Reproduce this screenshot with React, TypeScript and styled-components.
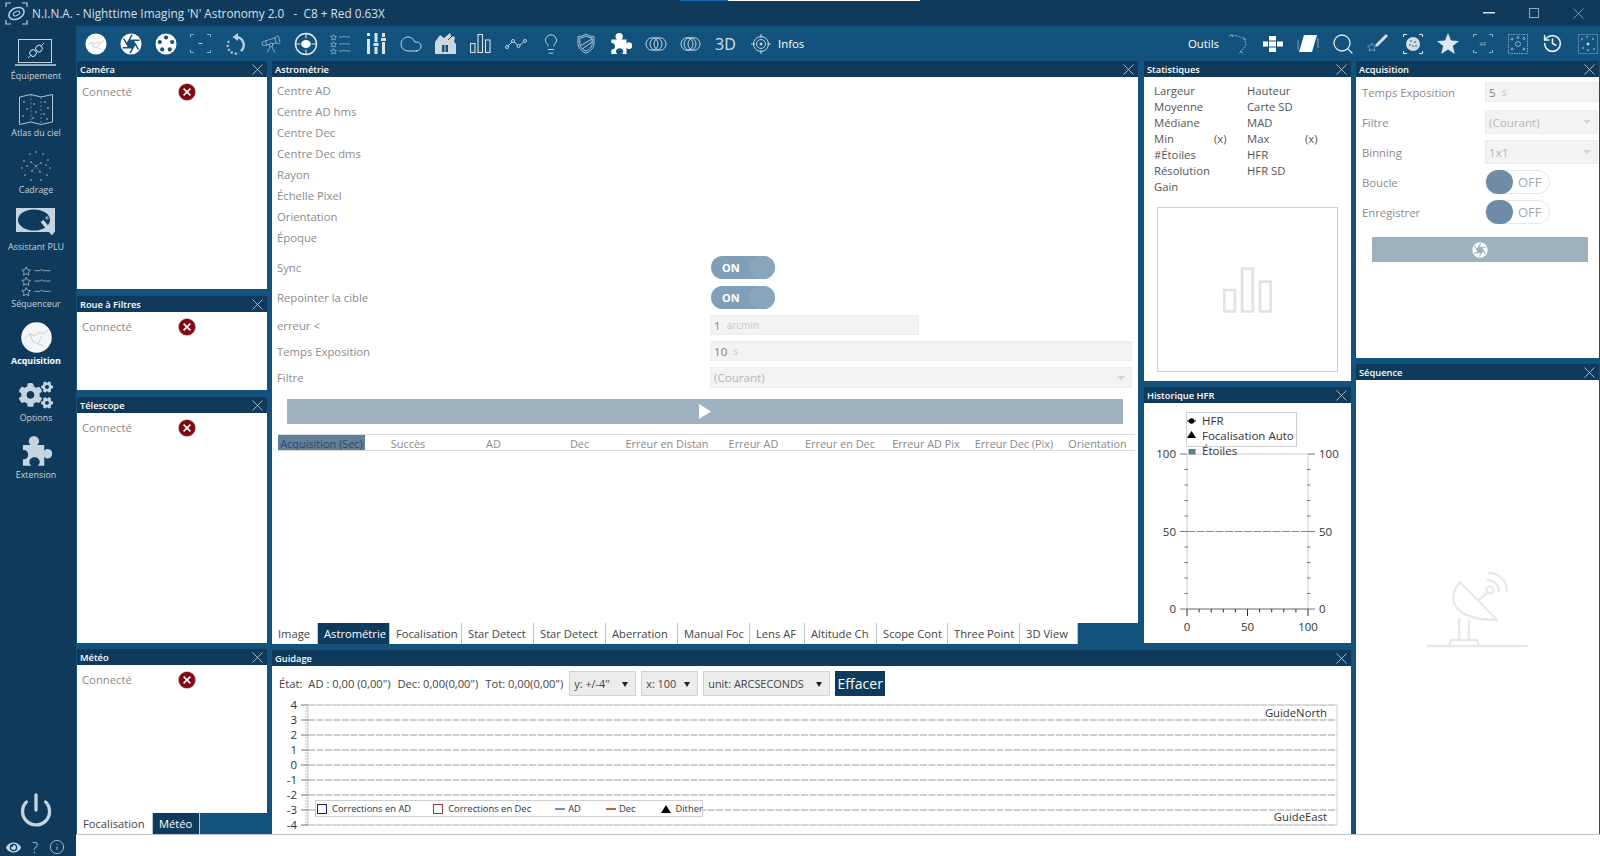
import React from 'react';
import styled, { createGlobalStyle } from 'styled-components';
import { Cloud, Lightbulb, Search, History, Power, Info, Telescope } from 'lucide-react';
import { FaCogs, FaEye } from 'react-icons/fa';

const DARK = '#0f3a5b';
const MID = '#13527c';
const LIGHT = '#c6d4df';
const FONT = `"Open Sans", "Noto Sans", "Liberation Sans", sans-serif`;

const Global = createGlobalStyle`
  html, body { margin: 0; padding: 0; background: #fff; overflow: hidden; }
  * { box-sizing: border-box; }
  body { font-family: ${FONT}; }
`;

const Window = styled.div`
  position: relative; width: 1600px; height: 856px; overflow: hidden;
  display: flex; flex-direction: column; background: ${DARK};
`;
const TaskStrip = styled.div`
  position: absolute; top: 0; left: 680px; width: 240px; height: 1px; display: flex;
  background: #fff;
  &::before { content: ''; width: 48px; background: #1565a8; }
`;
const TitleBar = styled.div`
  height: 26px; flex: none; display: flex; align-items: center; padding-left: 5px;
  color: #d5e0e8; font-size: 11.8px; white-space: pre; background: ${DARK};
`;
const TitleText = styled.span` margin-left: 4px; flex: 1; `;
const WinControls = styled.div` display: flex; margin-right: -1px; `;
const WinBtn = styled.div`
  width: 45px; height: 22px; display: flex; align-items: center; justify-content: center;
`;
const Shell = styled.div` flex: 1; display: flex; min-height: 0; `;
const Sidebar = styled.nav`
  width: 76px; flex: none; display: flex; flex-direction: column; background: ${DARK};
  padding: 9px 4px 0 0; position: relative;
`;
const NavItem = styled.div`
  height: 57px; display: flex; flex-direction: column; align-items: center; justify-content: flex-start;
  color: ${p => (p.$active ? '#fff' : LIGHT)}; font-size: 8.9px; font-weight: ${p => (p.$active ? 700 : 400)};
  white-space: nowrap;
`;
const NavIcon = styled.div`
  height: 34px; width: 72px; flex: none; display: flex; align-items: center; justify-content: center; padding-top: 1px;
`;
const NavSpacer = styled.div` flex: 1; `;
const PowerBox = styled.div` display: flex; justify-content: center; color: ${LIGHT}; margin-bottom: 12px; `;
const NavFooter = styled.div`
  display: flex; align-items: center; justify-content: space-between; padding: 0 7px 2px 6px; height: 16px;
  color: ${LIGHT}; font-size: 15px; font-weight: 300;
`;
const HelpMark = styled.span` line-height: 12px; `;
const Main = styled.div` flex: 1; display: flex; flex-direction: column; min-width: 0; `;
const Toolbar = styled.div`
  height: 35px; flex: none; background: ${MID}; display: flex; justify-content: space-between;
  padding-left: 2px; margin-right: -5px; color: #fff;
`;
const ToolGroup = styled.div` display: flex; align-items: center; `;
const ToolBtn = styled.div`
  width: 35px; height: 35px; display: flex; align-items: center; justify-content: center; flex: none;
  color: ${p => p.$c || '#fff'}; font-size: 16px;
`;
const ToolLabel = styled.span`
  font-size: 11.4px; color: #fff; margin: ${p => p.$m || '0'};
`;
const Docks = styled.div`
  flex: 1; min-height: 0; background: ${MID}; display: flex; padding-left: 1px; gap: 5px;
`;
const Column = styled.div`
  width: ${p => p.$w}px; flex: none; display: flex; flex-direction: column;
`;
const Panel = styled.section`
  height: ${p => p.$h}px; flex: ${p => (p.$h ? 'none' : '1')}; display: flex; flex-direction: column; min-height: 0;
  margin-top: ${p => p.$mt || 0}px;
`;
const PanelHead = styled.header`
  height: 16px; flex: none; background: ${DARK}; color: #fff; font-size: 9.3px; font-weight: 600;
  display: flex; align-items: center; justify-content: space-between; padding: 0 4px 0 3px;
`;
const PanelBody = styled.div`
  flex: 1; min-height: 0; background: #fff; display: flex; flex-direction: column;
  padding: ${p => p.$pad || 0}; position: relative; overflow: hidden;
`;
const Muted = styled.span` color: #8a8a8a; font-size: 11.3px; `;
const ConnectRow = styled.div`
  display: grid; grid-template-columns: 96px 20px; align-items: center; padding: 4px 0 0 5px; height: 25px;
`;
const TabBar = styled.div`
  height: ${p => p.$h || 21}px; flex: none; display: flex; padding-left: ${p => p.$pl || 0}px;
`;
const Tab = styled.div`
  width: ${p => p.$w}px; flex: none; overflow: hidden; white-space: nowrap;
  background: ${p => (p.$on ? DARK : '#fff')}; color: ${p => (p.$on ? '#fff' : '#444')};
  font-size: 11.2px; padding: 3px 0 0 6px; border-right: 1px solid #b9c7d2;
`;
const InfoRow = styled.div`
  height: 21px; padding-left: 5px; display: flex; align-items: center;
`;
const FormRow = styled.div`
  height: ${p => p.$h}px; flex: none; display: grid; grid-template-columns: ${p => p.$label}px 1fr; align-items: center;
  padding-left: ${p => p.$pl || 5}px; margin-top: ${p => p.$mt || 0}px;
`;
const Field = styled.div`
  height: ${p => p.$h || 20}px; width: ${p => (p.$w ? p.$w + 'px' : '100%')}; background: #f3f3f3;
  border: 1px solid #ececec; display: flex; align-items: center; padding: 0 3px; font-size: 11.6px; color: #808080;
  position: relative; gap: 6px;
`;
const Unit = styled.span` color: #c6c6c6; font-size: 10px; `;
const Caret = styled.i`
  position: absolute; right: 6px; top: 50%; margin-top: -2px; width: 0; height: 0;
  border-left: 4px solid transparent; border-right: 4px solid transparent; border-top: 4px solid #d4d4d4;
`;
const Ph = styled.span` color: #b5b5b5; `;
const ToggleOn = styled.div`
  width: 64px; height: 23px; margin-left: 1px; border-radius: 12px; background: #7f9fb8; color: #fff; font-size: 11px; font-weight: 700;
  display: flex; align-items: center; padding-left: 11px; position: relative; overflow: hidden;
  &::after { content: ''; position: absolute; right: 0; top: 0; bottom: 0; width: 26px; background: #88a5bb; border-radius: 12px; }
`;
const ToggleOff = styled.div`
  width: 65px; height: 24px; border-radius: 12px; border: 1px solid #e6e6e6; display: flex; align-items: center;
  font-size: 13px; color: #a8a8a8; position: relative; padding-left: 32px;
  &::before { content: ''; position: absolute; left: 0; top: -1px; width: 27px; height: 24px; border-radius: 12px; background: #6f8ca6; }
`;
const ActionBtn = styled.div`
  height: 25px; background: #9eb1bf; flex: none; display: flex; align-items: center; justify-content: center;
  margin: ${p => p.$m};
`;
const TableHead = styled.div`
  height: 17px; flex: none; margin: 10px 3px 0 6px; display: grid;
  grid-template-columns: 87px 86px 85px 87px 88px 85px 88px 84px 92px 75px;
  border-top: 1px solid #dcdcdc; border-bottom: 1px solid #dcdcdc;
`;
const Th = styled.div`
  font-size: 10.9px; text-align: center; overflow: hidden; white-space: nowrap; color: ${p => (p.$on ? '#32475c' : '#8a8a8a')};
  background: ${p => (p.$on ? '#5f7f9b' : 'transparent')}; line-height: 18px;
`;
const StatGrid = styled.div`
  display: grid; grid-template-columns: 60px 33px 58px 30px; padding: 5px 0 0 10px; grid-auto-rows: 16px;
  font-size: 11.3px; color: #555; align-items: center;
`;
const StatBox = styled.div`
  margin: 13px 13px 0 13px; height: 165px; border: 1px solid #cfcfcf; display: flex; align-items: center; justify-content: center;
`;
const EmptyCenter = styled.div` flex: 1; display: flex; align-items: center; justify-content: center; padding-top: 8px; `;
const GuideBar = styled.div`
  height: 30px; flex: none; display: flex; align-items: flex-end; padding-left: 7px; font-size: 11.2px; color: #444;
`;
const GuideText = styled.span`
  height: 25px; line-height: 25px; margin-right: ${p => p.$mr}px; white-space: pre;
`;
const GuideSelect = styled.div`
  width: ${p => p.$w}px; height: 25px; margin-right: 5px; background: #ececec; border: 1px solid #d2d2d2; position: relative;
  display: flex; align-items: center; padding-left: 4px; font-size: 10.9px; color: #444;
  &::after { content: ''; position: absolute; right: 7px; top: 10px; border-left: 3.5px solid transparent; border-right: 3.5px solid transparent; border-top: 5px solid #222; }
`;
const ClearBtn = styled.div`
  width: 50px; height: 25px; background: ${DARK}; color: #fff; font-size: 14px; display: flex; align-items: center; justify-content: center;
`;
const ChartWrap = styled.div` position: relative; flex: 1; min-height: 0; `;
const ChartSvg = styled.svg` display: block; `;
const Legend = styled.div`
  position: absolute; left: 43px; top: 104px; width: 388px; height: 17px; background: #fff; border: 1px solid #cfcfcf;
  display: flex; align-items: center; font-size: 9.4px; color: #333; padding-left: 1px; white-space: nowrap;
`;
const LegendMark = styled.span`
  flex: none; margin-right: ${p => p.$mr || 5}px;
  ${p => p.$kind === 'box' && `width: 10px; height: 10px; border: 1px solid ${p.$c};`}
  ${p => p.$kind === 'line' && `width: 10px; height: 2px; background: ${p.$c};`}
  ${p => p.$kind === 'tri' && `width: 0; height: 0; border-left: 5px solid transparent; border-right: 5px solid transparent; border-bottom: 8px solid #000;`}
`;
const LegendText = styled.span` margin-right: ${p => p.$mr}px; `;
const StatusStrip = styled.div` height: 22px; flex: none; background: #fff; border-top: 1px solid #b8c6d1; margin-top: 0; `;
const FlexTop = styled.div` display: flex; gap: 6px; height: 583px; `;
const FieldWrap = styled.div` padding-right: 6px; `;

const CloseX = ({ c = '#c9d6e0' }: { c?: string }) => (
  <svg width="11" height="11" viewBox="0 0 11 11"><path d="M.5.5l10 10M10.5.5l-10 10" stroke={c} strokeWidth=".8" fill="none" /></svg>
);
const RedX = () => (
  <svg width="18" height="18" viewBox="0 0 18 18">
    <circle cx="9" cy="9" r="8.6" fill="#7c0a12" stroke="#e8c4c4" strokeWidth=".6" />
    <path d="M5.6 5.6l6.8 6.8M12.4 5.6l-6.8 6.8" stroke="#fff" strokeWidth="1.6" />
  </svg>
);
const PuzzleIcon = ({ s, c = 'currentColor' }: { s: number; c?: string }) => (
  <svg width={s} height={s} viewBox="0 0 24 24" fill={c}>
    <path d="M1.500 7h6c-1-1-1.500-2-1.500-3a4 4 0 0 1 8 0c0 1-.5 2-1.500 3H18v4.500c1-1 1.500-1.500 2.500-1.500a3.500 3.500 0 0 1 0 7.500c-1 0-1.500-.5-2.500-1.500V23h-5c1-1 1.500-1.800 1.500-3 0-2-2-3.500-4-3.500S6.500 18 6.500 20c0 1.200.5 2 1.500 3H1.500v-5c2 .5 4-1 4-3.500S3.500 10.500 1.500 11z" />
  </svg>
);
const Aperture = ({ s = 24, bg = MID }: { s?: number; bg?: string }) => (
  <svg width={s} height={s} viewBox="0 0 24 24">
    <circle cx="12" cy="12" r="11.5" fill="#fff" />
    <g stroke={bg} strokeWidth="1.6" fill="none">
      <path d="M14.31 8l5.74 9.94M9.69 8h11.48M7.38 12l5.74-9.94M9.69 16L3.95 6.06M14.31 16H2.83M16.62 12l-5.74 9.94" />
    </g>
    <circle cx="12" cy="12" r="4.2" fill={bg} />
  </svg>
);
const SkyDisc = ({ s = 22 }: { s?: number }) => (
  <svg width={s} height={s} viewBox="0 0 24 24">
    <circle cx="12" cy="12" r="11.5" fill="#fff" />
    <path d="M3 13l4-3 3 2 4-2 3 1 4-3M7 10l2 5 4 1 3-5M14 16l3 2" stroke="#a9c0d2" strokeWidth=".8" fill="none" />
  </svg>
);
const FilterWheel = () => (
  <svg width="22" height="22" viewBox="0 0 22 22">
    <circle cx="11" cy="11" r="10.5" fill="#fff" />
    {[[11, 4.5], [17.2, 9], [14.8, 16.4], [7.2, 16.4], [4.8, 9]].map(([x, y], i) => <circle key={i} cx={x} cy={y} r="2.1" fill={MID} />)}
  </svg>
);
const CornerFrame = ({ children, c = '#8fb0c8', w = 21, h = 19 }: { children?: React.ReactNode; c?: string; w?: number; h?: number }) => (
  <svg width={w} height={h} viewBox={`0 0 ${w} ${h}`} fill="none">
    <path d={`M.5 3V.5H4M${w - 4} .5h3.5V3M.5 ${h - 3}v2.5H4M${w - 4} ${h - .5}h3.5V${h - 3}`} stroke={c} strokeWidth="1" />
    {children}
  </svg>
);
const RotateDash = () => (
  <svg width="20" height="22" viewBox="0 0 20 22" fill="none">
    <path d="M10 4a8 8 0 0 1 5 14" stroke="#b8d0e2" strokeWidth="2.4" />
    <path d="M12 0L6.5 4 12 8z" fill="#b8d0e2" />
    <path d="M3 8a8 8 0 0 0 1 10 8 8 0 0 0 9 2" stroke="#b8d0e2" strokeWidth="2.2" strokeDasharray="2 2" />
  </svg>
);
const GuideIcon = () => (
  <svg width="24" height="24" viewBox="0 0 24 24" fill="none">
    <circle cx="12" cy="12" r="10.5" stroke="#e6eef4" strokeWidth="1.4" />
    <ellipse cx="12" cy="12" rx="4.8" ry="4" fill="#fff" />
    <path d="M12 1.5v5M12 17.500v5M1.500 12h5M17.500 12h5" stroke="#e6eef4" strokeWidth="1" />
  </svg>
);
const StarList = ({ c = '#a5c0d4', s = 20, sw = .7 }: { c?: string; s?: number; sw?: number }) => (
  <svg width={s + 1} height={s} viewBox="0 0 21 20" fill="none" stroke={c} strokeWidth={sw}>
    {[3, 10, 17].map(y => (
      <g key={y}>
        <path d={`M3.500 ${y - 2.500}l.9 1.800 2 .3-1.450 1.400.35 2-1.800-.95-1.800.95.35-2L.6 ${y - .4}l2-.3z`} />
        <path d={`M9 ${y}h4l1 -1 1 1h5`} />
      </g>
    ))}
  </svg>
);
const Sliders = () => (
  <svg width="20" height="21" viewBox="0 0 20 21" fill="#d8e4ec">
    <rect x="1" y="0" width="3" height="3" /><rect x="1" y="6" width="3" height="15" />
    <rect x="8.500" y="0" width="3" height="9" /><rect x="7.500" y="10" width="5" height="3" /><rect x="8.500" y="14" width="3" height="7" />
    <rect x="16" y="0" width="3" height="4" /><rect x="15" y="5" width="5" height="3" /><rect x="16" y="9" width="3" height="12" />
  </svg>
);
const Barn = () => (
  <svg width="21" height="21" viewBox="0 0 21 21">
    <path d="M0 9l5-7 4 3 6-5 1 3 4 1-1 5 2 2v10H0z" fill="#cdd8e1" />
    <path d="M7 19v-7h6v7z" fill={MID} /><path d="M10 12v7" stroke="#cdd8e1" />
    <path d="M13 7l4-4" stroke={MID} strokeWidth="1" />
  </svg>
);
const Bars = ({ c = '#d4e1ea', w = 21, h = 19 }: { c?: string; w?: number; h?: number }) => (
  <svg width={w} height={h} viewBox="0 0 21 19" fill="none" stroke={c} strokeWidth="1.100">
    <rect x=".5" y="9.500" width="4.500" height="9" /><rect x="8" y=".5" width="4.500" height="18" /><rect x="15.500" y="6" width="4.500" height="12.500" />
  </svg>
);
const LineDots = () => (
  <svg width="22" height="12" viewBox="0 0 22 12" fill="none" stroke="#d4e1ea" strokeWidth=".9">
    <circle cx="2" cy="9" r="1.500" /><circle cx="8" cy="3" r="1.500" /><circle cx="13.500" cy="8" r="1.500" /><circle cx="20" cy="3" r="1.500" />
    <path d="M3 8l4-4M9 4l3.500 3M15 7l3.500-3" />
  </svg>
);
const ShieldIcon = () => (
  <svg width="18" height="21" viewBox="0 0 18 21" fill="none" stroke="#c3d3df" strokeWidth=".9">
    <path d="M1 3.500C4 3.500 7 2.500 9 .8c2 1.700 5 2.700 8 2.700v7c0 4.500-3.500 7.800-8 9.700-4.500-1.900-8-5.200-8-9.700z" />
    <path d="M2.800 5c2.300-.2 4.500-.9 6.200-2.100 1.700 1.200 3.900 1.900 6.200 2.100v5.500c0 3.500-2.800 6.100-6.200 7.600-3.400-1.500-6.200-4.100-6.200-7.600z" />
    <path d="M3 13L15 6M5 16l10-7" />
  </svg>
);
const Rings = ({ flip }: { flip?: boolean }) => (
  <svg width="22" height="14" viewBox="0 0 22 14" fill="none" stroke="#d4e1ea" strokeWidth=".9">
    {(flip ? [7, 10, 14] : [7, 11, 15]).map(x => <ellipse key={x} cx={x} cy="7" rx="6" ry="6.300" />)}
  </svg>
);
const TargetIcon = () => (
  <svg width="20" height="20" viewBox="0 0 20 20" fill="none" stroke="#d4e1ea" strokeWidth=".9">
    <circle cx="10" cy="10" r="7.500" /><circle cx="10" cy="10" r="4.500" /><circle cx="10" cy="10" r="1" fill="#d4e1ea" />
    <path d="M10 0v4M10 16v4M0 10h4M16 10h4" />
  </svg>
);
const ArcIcon = () => (
  <svg width="20" height="22" viewBox="0 0 20 22" fill="none" stroke="#a5c0d4" strokeWidth=".8">
    <path d="M1 3l5-1 6 2 5 3 1 5-3 4-4 5" strokeDasharray="2 1" />
    <path d="M15 4l3 3M3 1l2 3M12 18l3 2" />
  </svg>
);
const CrossBlocks = () => (
  <svg width="20" height="16" viewBox="0 0 20 16" fill="#fff">
    <rect x="0" y="5.500" width="5" height="5" /><rect x="6" y="0" width="7" height="4.500" /><rect x="6" y="5.500" width="7" height="5" /><rect x="6" y="11.500" width="7" height="4.500" /><rect x="14" y="5.500" width="6" height="5" />
  </svg>
);
const ParaIcon = () => (
  <svg width="22" height="17" viewBox="0 0 22 17">
    <path d="M7 0h13l-5 17H2z" fill="#fff" />
    <path d="M1 5v10M21 3v10" stroke="#a5c0d4" strokeWidth=".8" />
  </svg>
);
const WandStar = () => (
  <svg width="22" height="22" viewBox="0 0 22 22" fill="none">
    <path d="M9 13L20 2" stroke="#d0dde6" strokeWidth="3" />
    <path d="M5 10l1.300 2.800 3 .3-2.200 2 .7 3-2.800-1.500L2 18l.7-3L.5 13l3-.3z" stroke="#8fb0c8" strokeWidth=".7" />
  </svg>
);
const FrameDisc = () => (
  <CornerFrame w={20} h={20} c="#e5edf3">
    <circle cx="10" cy="10" r="7" fill="#d2dee7" />
    <g fill={MID}><circle cx="8" cy="7" r=".8" /><circle cx="12" cy="8" r=".8" /><circle cx="10" cy="12" r=".8" /><circle cx="7" cy="11" r=".8" /><circle cx="13" cy="12" r=".8" /></g>
  </CornerFrame>
);
const AfFrame = () => (
  <CornerFrame w={20} h={19}>
    <text x="10" y="12" textAnchor="middle" fontSize="6" fill="#a5c0d4" fontFamily={FONT}>AF</text>
  </CornerFrame>
);
const BoxCircles = () => (
  <svg width="20" height="20" viewBox="0 0 20 20" fill="none" stroke="#b8cfdf" strokeWidth=".7">
    <rect x=".5" y=".5" width="19" height="19" strokeDasharray="1.500 1" />
    <circle cx="10" cy="10" r="2.500" /><circle cx="4" cy="5" r="1" /><circle cx="10" cy="3.500" r="1" /><circle cx="16" cy="4.500" r="1" /><circle cx="4" cy="15" r="1" /><circle cx="16" cy="15" r="1" />
  </svg>
);
const DotFrame = () => (
  <svg width="20" height="20" viewBox="0 0 20 20" fill="#dfe9f0">
    <rect x=".5" y=".5" width="19" height="19" fill="none" stroke="#b8cfdf" strokeWidth=".7" strokeDasharray="1 1" />
    <path d="M10 8l.7 1.300 1.300.7-1.300.7L10 12l-.7-1.300L8 10l1.300-.7z" />
    {[[4, 5], [15, 5], [5, 14], [16, 15], [10, 16], [9, 3]].map(([x, y], i) => <circle key={i} cx={x} cy={y} r=".8" />)}
  </svg>
);
const SharpStar = () => (
  <svg width="22" height="21" viewBox="0 0 22 21"><path d="M11 0l3 7.500 8 .5-6.200 5 2 8L11 16.600 4.200 21l2-8L0 8l8-.5z" fill="#dce7ef" /></svg>
);

const Laptop = () => (
  <svg width="42" height="28" viewBox="0 0 42 28" fill="none" stroke={LIGHT}>
    <rect x="3.500" y=".5" width="33" height="23" strokeWidth="1" />
    <path d="M0 26h41" strokeWidth="1.400" />
    <path d="M13 19l3-3M26 7l3-3" strokeWidth="1" />
    <rect x="15" y="11" width="6" height="6" rx="2" transform="rotate(-45 18 14)" strokeWidth="1" />
    <rect x="21" y="6.500" width="6" height="6" rx="2" transform="rotate(-45 24 9.500)" strokeWidth="1" />
  </svg>
);
const SkyMap = () => (
  <svg width="34" height="31" viewBox="0 0 34 31" fill="none" stroke={LIGHT} strokeWidth=".9">
    <path d="M.5 3L12 .5 22 3 33.500 .5V28L22 30.500 12 28 .5 30.500z" />
    <path d="M12 .5V28M22 3V30.500" strokeDasharray="2 2" strokeWidth=".5" />
    {[[5, 8], [8, 15], [4, 22], [15, 10], [17, 18], [14, 24], [26, 8], [29, 14], [25, 20], [28, 25]].map(([x, y], i) => <circle key={i} cx={x} cy={y} r=".8" fill={LIGHT} stroke="none" />)}
  </svg>
);
const Framing = () => (
  <svg width="32" height="32" viewBox="0 0 32 32" fill={LIGHT}>
    {[[16, 1], [10, 3], [23, 3], [4, 10], [28, 9], [2, 17], [30, 17], [5, 24], [27, 24], [11, 29], [21, 29], [16, 15], [11, 11], [21, 12], [12, 20], [20, 21], [26, 14], [7, 15]].map(([x, y], i) => <circle key={i} cx={x} cy={y} r=".75" />)}
    <path d="M11 11l5 4 5-3M16 15l-4 5M16 15l4 6" stroke={LIGHT} strokeWidth=".3" fill="none" />
  </svg>
);
const FlatWizard = () => (
  <svg width="40" height="31" viewBox="0 0 40 31">
    <rect x="0" y="0" width="39" height="24" fill={LIGHT} />
    <ellipse cx="18" cy="12" rx="16" ry="10.500" fill={DARK} />
    <path d="M26 13l11 13" stroke={LIGHT} strokeWidth="3.500" />
    <path d="M31 8v4M29 10h4" stroke={LIGHT} strokeWidth=".8" />
  </svg>
);
const SkyBig = () => (
  <svg width="31" height="31" viewBox="0 0 24 24">
    <circle cx="12" cy="12" r="11.800" fill="#f2f6f9" />
    <path d="M3 13l4-4 3 2 4-3 4 1 3-3M7 9l2 6 4 2 3-6M13 17l4 1" stroke="#9fb4c6" strokeWidth=".45" fill="none" />
  </svg>
);

const gTicks = [4, 3, 2, 1, 0, -1, -2, -3, -4];
const GuideChart = () => {
  const yOf = (v: number) => 69 - v * 15;
  const minor: number[] = [];
  for (let v = -4; v < 4; v += 0.2) minor.push(v);
  return (
    <ChartSvg width="1079" height="137" viewBox="0 0 1079 137">
      <rect x="36" y="9" width="1029" height="120" fill="none" stroke="#d5d5d5" />
      {gTicks.map(v => (
        <g key={v}>
          <path d={`M36 ${yOf(v)}H1065`} stroke={v === 4 || v === -4 ? '#c4c4c4' : '#9a9a9a'} strokeWidth="1" strokeDasharray="7 1.500" />
          <path d={`M29 ${yOf(v)}H36`} stroke="#777" />
          <text x="25" y={yOf(v) + 4} textAnchor="end" fontSize="11.500" fill="#333" fontFamily={FONT}>{v}</text>
        </g>
      ))}
      {minor.map(v => <path key={v} d={`M33 ${yOf(v)}H36`} stroke="#999" strokeWidth=".6" />)}
      <text x="1055" y="21" textAnchor="end" fontSize="11.300" fill="#333" fontFamily={FONT}>GuideNorth</text>
      <text x="1055" y="125" textAnchor="end" fontSize="11.300" fill="#333" fontFamily={FONT}>GuideEast</text>
    </ChartSvg>
  );
};
const HfrChart = () => {
  const L = 43, R = 164, T = 51, B = 206;
  const t = { fontSize: 11.500, fill: '#333', fontFamily: FONT } as const;
  return (
    <ChartSvg width="207" height="240" viewBox="0 0 207 240">
      <path d={`M${L} ${T}V${B}M${R} ${T}V${B}M${L} ${T}H${R}`} stroke="#ccc" fill="none" />
      <path d={`M${L} ${B}H${R}`} stroke="#666" />
      <path d={`M${L} ${(T + B) / 2}H${R}`} stroke="#888" strokeDasharray="8 1.500" />
      {[0, 1, 2, 3, 4, 5, 6, 7, 8, 9, 10].map(i => {
        const y = T + (B - T) * i / 10; const x = L + (R - L) * i / 10; const major = i % 5 === 0;
        return (
          <g key={i}>
            <path d={`M${major ? L - 7 : L - 2.500} ${y}H${L + (major ? 0 : 1)}`} stroke="#777" />
            <path d={`M${R - (major ? 0 : 1)} ${y}H${major ? R + 7 : R + 2.500}`} stroke="#777" />
            <path d={`M${x} ${B}V${B + (major ? 7 : 3.500)}`} stroke="#333" />
          </g>
        );
      })}
      {[[100, T], [50, (T + B) / 2], [0, B]].map(([v, y]) => (
        <g key={v}>
          <text x="32" y={y + 4} textAnchor="end" {...t}>{v}</text>
          <text x="175" y={y + 4} {...t}>{v}</text>
        </g>
      ))}
      {[[0, L], [50, (L + R) / 2], [100, R]].map(([v, x]) => <text key={v} x={x} y="228" textAnchor="middle" {...t}>{v}</text>)}
      <rect x="42.500" y="9.500" width="110" height="34" fill="#fff" stroke="#cfcfcf" />
      <path d="M43 18h9" stroke="#000" /><circle cx="47.500" cy="18" r="2.800" fill="#000" />
      <text x="58" y="22" {...t}>HFR</text>
      <path d="M47.500 28l4.500 7h-9z" fill="#000" />
      <text x="58" y="37" {...t}>Focalisation Auto</text>
      <rect x="44.500" y="46" width="7" height="5.500" fill="#607d8b" />
      <text x="58" y="52" {...t}>Étoiles</text>
    </ChartSvg>
  );
};
const Dish = () => (
  <svg width="110" height="84" viewBox="46 26 110 84" fill="none" stroke="#e4e9ed" strokeWidth="2.400" strokeLinecap="round">
    <path d="M51 103h99M72 103l2-6h26l2 6M82 97V76M92 97V78" />
    <path d="M83 39c-15 18 -6 38 37 38z" strokeLinejoin="round" />
    <path d="M102 57l8-7" /><circle cx="113" cy="47" r="3.500" />
    <path d="M112 30a18 18 0 0 1 18 18M111 37a11 11 0 0 1 11 11" />
  </svg>
);

const astroInfo = ['Centre AD', 'Centre AD hms', 'Centre Dec', 'Centre Dec dms', 'Rayon', 'Échelle Pixel', 'Orientation', 'Époque'];
const columns = ['Acquisition (Sec)', 'Succès', 'AD', 'Dec', 'Erreur en Distan', 'Erreur AD', 'Erreur en Dec', 'Erreur AD Pix', 'Erreur Dec (Pix)', 'Orientation'];
const tabs: [string, number][] = [['Image', 46], ['Astrométrie', 72], ['Focalisation', 72], ['Star Detect', 72], ['Star Detect', 72], ['Aberration', 72], ['Manual Foc', 72], ['Lens AF', 55], ['Altitude Ch', 72], ['Scope Cont', 71], ['Three Point', 72], ['3D View', 58]];
const navItems: [string, React.ReactNode, boolean?][] = [
  ['Équipement', <Laptop />], ['Atlas du ciel', <SkyMap />], ['Cadrage', <Framing />], ['Assistant PLU', <FlatWizard />],
  ['Séquenceur', <StarList c={LIGHT} s={30} sw={.45} />], ['Acquisition', <SkyBig />, true], ['Options', <FaCogs size={34} />], ['Extension', <PuzzleIcon s={31} />],
];

const ConnectedPanel = ({ title, h, mt }: { title: string; h: number; mt?: number }) => (
  <Panel $h={h} $mt={mt}>
    <PanelHead>{title}<CloseX /></PanelHead>
    <PanelBody>
      <ConnectRow><Muted>Connecté</Muted><RedX /></ConnectRow>
    </PanelBody>
  </Panel>
);

export default function App() {
  return (
    <Window>
      <Global />
      <TaskStrip />
      <TitleBar>
        <svg width="23" height="23" viewBox="0 0 23 23" fill="none" stroke="#b9cddc">
          <path d="M1 5V1h5M17 1h5v4M1 18v4h5M22 18v4h-5" strokeWidth="1.200" />
          <ellipse cx="11.500" cy="11.500" rx="8" ry="5.500" transform="rotate(-25 11.500 11.500)" strokeWidth="1.600" />
          <ellipse cx="11.500" cy="11.500" rx="3.500" ry="2" transform="rotate(-25 11.500 11.500)" strokeWidth="1" />
        </svg>
        <TitleText>{"N.I.N.A. - Nighttime Imaging 'N' Astronomy 2.0   -  C8 + Red 0.63X"}</TitleText>
        <WinControls>
          <WinBtn><svg width="12" height="2"><rect width="12" height="1.500" fill="#d5e0e8" /></svg></WinBtn>
          <WinBtn><svg width="10" height="10" fill="none"><rect x=".5" y=".5" width="9" height="9" stroke="#8fa8ba" /></svg></WinBtn>
          <WinBtn><CloseX c="#8fa8ba" /></WinBtn>
        </WinControls>
      </TitleBar>
      <Shell>
        <Sidebar>
          {navItems.map(([label, icon, active]) => (
            <NavItem key={label} $active={active}><NavIcon>{icon}</NavIcon>{label}</NavItem>
          ))}
          <NavSpacer />
          <PowerBox><Power size={36} strokeWidth={2.200} /></PowerBox>
          <NavFooter>
            <FaEye size={15} /><HelpMark>?</HelpMark><Info size={16} strokeWidth={1.200} />
          </NavFooter>
        </Sidebar>
        <Main>
          <Toolbar>
            <ToolGroup>
              <ToolBtn><SkyDisc /></ToolBtn>
              <ToolBtn><Aperture s={22} /></ToolBtn>
              <ToolBtn><FilterWheel /></ToolBtn>
              <ToolBtn><CornerFrame><path d="M8.500 9.500h4" stroke="#c5d7e4" strokeWidth="1" /></CornerFrame></ToolBtn>
              <ToolBtn><RotateDash /></ToolBtn>
              <ToolBtn $c="#8fb0c8"><Telescope size={22} strokeWidth={1} /></ToolBtn>
              <ToolBtn><GuideIcon /></ToolBtn>
              <ToolBtn><StarList /></ToolBtn>
              <ToolBtn><Sliders /></ToolBtn>
              <ToolBtn $c="#d4e1ea"><Cloud size={24} strokeWidth={.9} /></ToolBtn>
              <ToolBtn><Barn /></ToolBtn>
              <ToolBtn><Bars /></ToolBtn>
              <ToolBtn><LineDots /></ToolBtn>
              <ToolBtn $c="#d4e1ea"><Lightbulb size={22} strokeWidth={1} /></ToolBtn>
              <ToolBtn><ShieldIcon /></ToolBtn>
              <ToolBtn><PuzzleIcon s={22} /></ToolBtn>
              <ToolBtn><Rings /></ToolBtn>
              <ToolBtn><Rings flip /></ToolBtn>
              <ToolBtn $c="#d4e1ea">3D</ToolBtn>
              <ToolBtn><TargetIcon /></ToolBtn>
              <ToolLabel>Infos</ToolLabel>
            </ToolGroup>
            <ToolGroup>
              <ToolLabel $m="0 1px 0 0">Outils</ToolLabel>
              <ToolBtn><ArcIcon /></ToolBtn>
              <ToolBtn><CrossBlocks /></ToolBtn>
              <ToolBtn><ParaIcon /></ToolBtn>
              <ToolBtn $c="#e5edf3"><Search size={24} strokeWidth={1.300} /></ToolBtn>
              <ToolBtn><WandStar /></ToolBtn>
              <ToolBtn><FrameDisc /></ToolBtn>
              <ToolBtn><SharpStar /></ToolBtn>
              <ToolBtn><AfFrame /></ToolBtn>
              <ToolBtn><BoxCircles /></ToolBtn>
              <ToolBtn $c="#e5edf3"><History size={21} strokeWidth={1.800} /></ToolBtn>
              <ToolBtn><DotFrame /></ToolBtn>
            </ToolGroup>
          </Toolbar>
          <Docks>
            <Column $w={190}>
              <ConnectedPanel title="Caméra" h={228} />
              <ConnectedPanel title="Roue à Filtres" h={94} mt={7} />
              <ConnectedPanel title="Télescope" h={246} mt={7} />
              <ConnectedPanel title="Météo" h={164} mt={6} />
              <TabBar>
                <Tab $w={76}>Focalisation</Tab>
                <Tab $w={47} $on>Météo</Tab>
              </TabBar>
            </Column>
            <Column $w={1079}>
              <Panel $h={583}>
                <FlexTop>
                  <Column $w={866}>
                    <Panel $h={562}>
                      <PanelHead>Astrométrie<CloseX /></PanelHead>
                      <PanelBody $pad="3px 0 0 0">
                        {astroInfo.map(t => <InfoRow key={t}><Muted>{t}</Muted></InfoRow>)}
                        <FormRow $h={30} $mt={4} $label={433}><Muted>Sync</Muted><ToggleOn>ON</ToggleOn></FormRow>
                        <FormRow $h={30} $label={433}><Muted>Repointer la cible</Muted><ToggleOn>ON</ToggleOn></FormRow>
                        <FormRow $h={26} $label={433}><Muted>erreur &lt;</Muted><Field $w={209}>1 <Unit>arcmin</Unit></Field></FormRow>
                        <FormRow $h={26} $label={433}><Muted>Temps Exposition</Muted><FieldWrap><Field>10 <Unit>s</Unit></Field></FieldWrap></FormRow>
                        <FormRow $h={27} $label={433}><Muted>Filtre</Muted><FieldWrap><Field $h={21}><Ph>(Courant)</Ph><Caret /></Field></FieldWrap></FormRow>
                        <ActionBtn $m="8px 15px 0 15px">
                          <svg width="12" height="15" viewBox="0 0 12 15"><path d="M0 0l12 7.500L0 15z" fill="#fff" /></svg>
                        </ActionBtn>
                        <TableHead>
                          {columns.map((c, i) => <Th key={i} $on={i === 0}>{c}</Th>)}
                        </TableHead>
                      </PanelBody>
                    </Panel>
                    <TabBar>
                      {tabs.map(([t, w], i) => <Tab key={i} $w={w} $on={i === 1}>{t}</Tab>)}
                    </TabBar>
                  </Column>
                  <Column $w={207}>
                    <Panel $h={320}>
                      <PanelHead>Statistiques<CloseX /></PanelHead>
                      <PanelBody>
                        <StatGrid>
                          <span>Largeur</span><span /><span>Hauteur</span><span />
                          <span>Moyenne</span><span /><span>Carte SD</span><span />
                          <span>Médiane</span><span /><span>MAD</span><span />
                          <span>Min</span><span>(x)</span><span>Max</span><span>(x)</span>
                          <span>#Étoiles</span><span /><span>HFR</span><span />
                          <span>Résolution</span><span /><span>HFR SD</span><span />
                          <span>Gain</span>
                        </StatGrid>
                        <StatBox><Bars c="#dfe3e6" w={50} h={48} /></StatBox>
                      </PanelBody>
                    </Panel>
                    <Panel $h={256} $mt={6}>
                      <PanelHead>Historique HFR<CloseX /></PanelHead>
                      <PanelBody><HfrChart /></PanelBody>
                    </Panel>
                  </Column>
                </FlexTop>
              </Panel>
              <Panel $mt={6}>
                <PanelHead>Guidage<CloseX /></PanelHead>
                <PanelBody>
                  <GuideBar>
                    <GuideText $mr={6}>État:</GuideText>
                    <GuideText $mr={7}>{'AD : 0,00 (0,00")'}</GuideText>
                    <GuideText $mr={7}>{'Dec: 0,00(0,00")'}</GuideText>
                    <GuideText $mr={6}>{'Tot: 0,00(0,00")'}</GuideText>
                    <GuideSelect $w={67}>{'y: +/-4"'}</GuideSelect>
                    <GuideSelect $w={57}>x: 100</GuideSelect>
                    <GuideSelect $w={127}>unit: ARCSECONDS</GuideSelect>
                    <ClearBtn>Effacer</ClearBtn>
                  </GuideBar>
                  <ChartWrap>
                    <GuideChart />
                    <Legend>
                      <LegendMark $kind="box" $c="#1a1a6e" />
                      <LegendText $mr={22}>Corrections en AD</LegendText>
                      <LegendMark $kind="box" $c="#a0303c" />
                      <LegendText $mr={24}>Corrections en Dec</LegendText>
                      <LegendMark $kind="line" $c="#6a8fc0" $mr={3} />
                      <LegendText $mr={25}>AD</LegendText>
                      <LegendMark $kind="line" $c="#d0602a" $mr={3} />
                      <LegendText $mr={26}>Dec</LegendText>
                      <LegendMark $kind="tri" $mr={4} />
                      <LegendText $mr={0}>Dither</LegendText>
                    </Legend>
                  </ChartWrap>
                </PanelBody>
              </Panel>
            </Column>
            <Column $w={243}>
              <Panel $h={297}>
                <PanelHead>Acquisition<CloseX /></PanelHead>
                <PanelBody>
                  <FormRow $h={30} $pl={6} $label={123}><Muted>Temps Exposition</Muted><Field>5 <Unit>s</Unit></Field></FormRow>
                  <FormRow $h={30} $pl={6} $label={123}><Muted>Filtre</Muted><Field $h={24} $w={113}><Ph>(Courant)</Ph><Caret /></Field></FormRow>
                  <FormRow $h={30} $pl={6} $label={123}><Muted>Binning</Muted><Field $h={24} $w={113}><Ph>1x1</Ph><Caret /></Field></FormRow>
                  <FormRow $h={30} $pl={6} $label={123}><Muted>Boucle</Muted><ToggleOff>OFF</ToggleOff></FormRow>
                  <FormRow $h={30} $pl={6} $label={123}><Muted>Enregistrer</Muted><ToggleOff>OFF</ToggleOff></FormRow>
                  <ActionBtn $m="10px 11px 0 16px"><Aperture s={16} bg="#9eb1bf" /></ActionBtn>
                </PanelBody>
              </Panel>
              <Panel $mt={6}>
                <PanelHead>Séquence<CloseX /></PanelHead>
                <PanelBody><EmptyCenter><Dish /></EmptyCenter></PanelBody>
              </Panel>
            </Column>
          </Docks>
          <StatusStrip />
        </Main>
      </Shell>
    </Window>
  );
}
